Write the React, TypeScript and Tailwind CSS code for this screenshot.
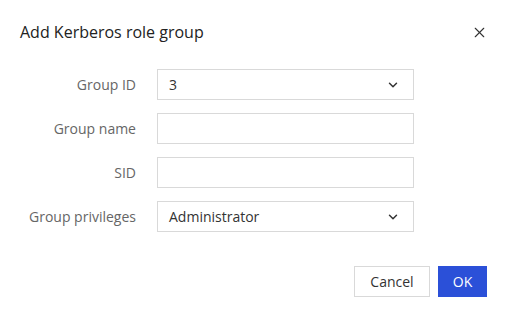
import { ChevronDown, X } from "lucide-react";

function Select({ value }: { value: string }) {
  return (
    <div className="flex h-[31px] w-[257px] items-center justify-between border border-[#d9d9d9] bg-white pl-[11px] pr-[13px] text-[14px] text-[#333]">
      <span>{value}</span>
      <ChevronDown className="h-[14px] w-[14px] text-[#333]" strokeWidth={2.5} />
    </div>
  );
}

function Input() {
  return <div className="h-[31px] w-[257px] border border-[#d9d9d9] bg-white" />;
}

export default function App() {
  const rows = [
    { label: "Group ID", field: <Select value="3" /> },
    { label: "Group name", field: <Input /> },
    { label: "SID", field: <Input /> },
    { label: "Group privileges", field: <Select value="Administrator" /> },
  ];

  return (
    <div className="h-[313px] w-[508px] bg-white" style={{ fontFamily: '"Open Sans", "Noto Sans", sans-serif' }}>
      <div className="flex h-[66px] items-center justify-between pl-[20px] pr-[20px] pb-[2px]">
        <h2 className="text-[16px] text-[#222]">Add Kerberos role group</h2>
        <X className="h-[17px] w-[17px] text-[#333]" strokeWidth={1.6} />
      </div>

      <div className="flex flex-col gap-[13px] pt-[3px]">
        {rows.map((r) => (
          <div key={r.label} className="flex items-center">
            <div className="w-[137px] pr-[1px] text-right text-[14px] text-[#666]">{r.label}</div>
            <div className="ml-[20px]">{r.field}</div>
          </div>
        ))}
      </div>

      <div className="mt-[34px] flex justify-end gap-[8px] pr-[21px]">
        <button className="h-[31px] w-[76px] border border-[#d9d9d9] bg-white text-[14px] text-[#333]">Cancel</button>
        <button className="h-[31px] w-[49px] bg-[#2b50d8] text-[14px] text-white">OK</button>
      </div>
    </div>
  );
}
